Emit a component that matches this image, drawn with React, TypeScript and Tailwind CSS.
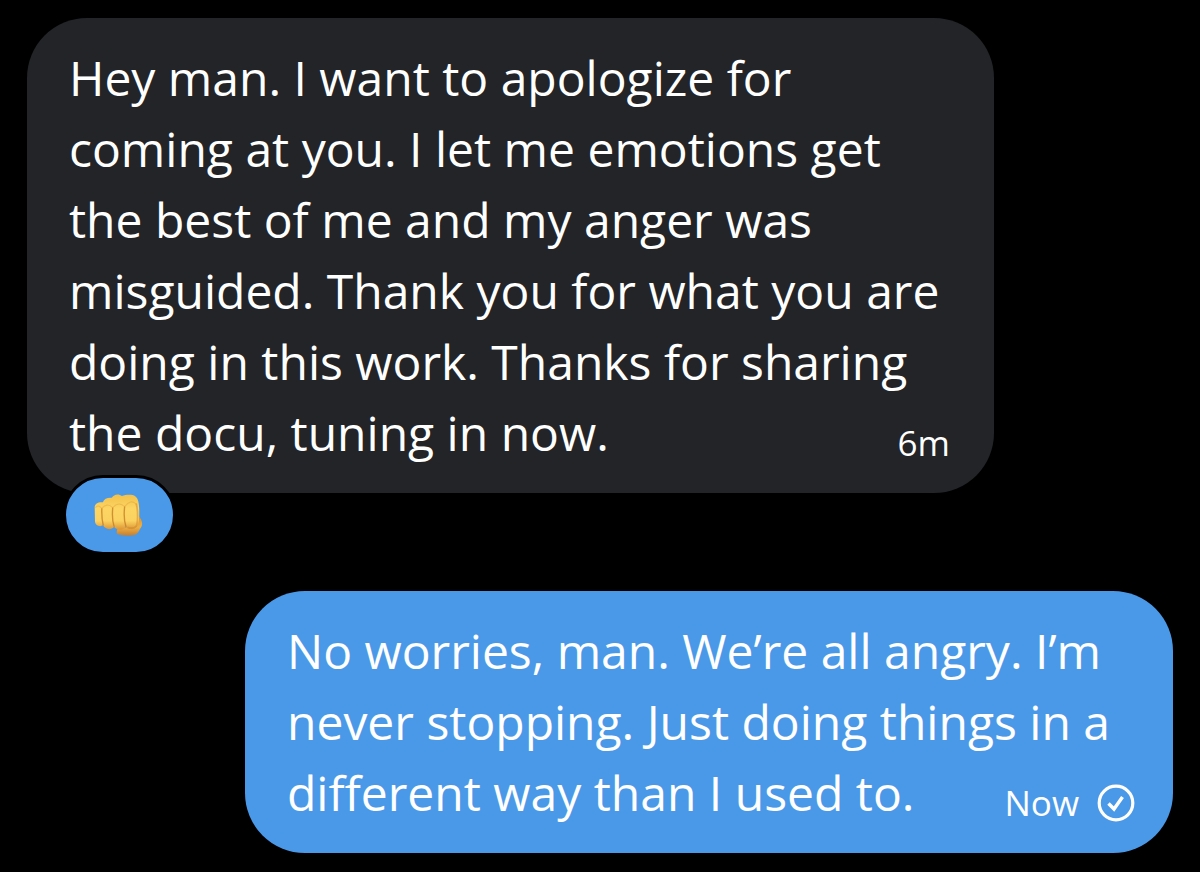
import type { ReactNode } from "react";

function FistIcon() {
  return (
    <svg viewBox="0 0 144 126" className="mr-0.5 h-[43px] w-[49px]" role="img" aria-label="Oncoming fist">
      <defs>
        <linearGradient id="skin" x1="0" y1="0" x2="0" y2="1">
          <stop offset="0" stopColor="#f3c04a" />
          <stop offset="0.4" stopColor="#fcd563" />
          <stop offset="0.75" stopColor="#fbd260" />
          <stop offset="1" stopColor="#dd9434" />
        </linearGradient>
        <linearGradient id="thumb" x1="0" y1="0" x2="0" y2="1">
          <stop offset="0" stopColor="#d98f2c" />
          <stop offset="0.6" stopColor="#eeb044" />
          <stop offset="1" stopColor="#c87e2c" />
        </linearGradient>
      </defs>
      <path
        d="M128 60 C141 74 145 88 138 98 C131 108 130 117 119 120 C103 124 84 122 70 118 C65 115 67 109 69 103 L118 93 Z"
        fill="url(#thumb)"
      />
      <path
        d="M2 38 C3 28 11 23 26 24 C30 13 40 10 52 11 C58 1 72 -3 82 6 C94 2 111 0 122 7 C131 14 133 31 133 53 C133 73 132 88 125 97 C116 107 101 104 94 96 C87 108 66 107 59 96 C51 107 33 105 27 92 C15 98 4 91 3 82 Z"
        fill="url(#skin)"
      />
      <path
        d="M23 43 Q22 70 27 91 M55 41 Q52 75 59 95 M90 38 Q86 72 94 96"
        fill="none"
        stroke="#c27a22"
        strokeWidth="4"
        strokeLinecap="round"
        opacity="0.75"
      />
      <path
        d="M4 40 Q12 29 23 42 Q38 24 55 40 Q73 20 90 37 Q108 13 125 30"
        fill="none"
        stroke="#e0a038"
        strokeWidth="3"
        opacity="0.45"
      />
      <path
        d="M124 28 C130 50 129 82 124 95 Q114 104 98 98"
        fill="none"
        stroke="#d0852c"
        strokeWidth="5"
        opacity="0.5"
      />
    </svg>
  );
}

function SentIcon() {
  return (
    <svg viewBox="0 0 38 38" className="size-[38px]" fill="none" stroke="currentColor" role="img" aria-label="Sent">
      <circle cx="19" cy="19" r="16.8" strokeWidth="3.2" />
      <path d="M11.5 19.5 L17 25 L25.5 13" strokeWidth="3.4" />
    </svg>
  );
}

type MessageProps = {
  lines: string[];
  lastLine: string;
  meta: ReactNode;
  className: string;
};

function Message({ lines, lastLine, meta, className }: MessageProps) {
  return (
    <article className={`rounded-[60px] pt-6 pb-[25px] pl-[42px] ${className}`}>
      {lines.map((line) => (
        <p key={line} className="whitespace-nowrap">
          {line}
        </p>
      ))}
      <div className="flex items-end justify-between">
        <p className="whitespace-nowrap">{lastLine}</p>
        <div className="flex items-center gap-[18px] text-[35px] leading-[50px]">{meta}</div>
      </div>
    </article>
  );
}

export default function App() {
  return (
    <main className="flex min-h-screen flex-col bg-black px-[27px] pt-[18px] pb-[18px] font-['Open_Sans',sans-serif] text-[48px] leading-[71px] text-white">
      <section className="flex flex-col items-start">
        <Message
          className="w-full max-w-[967px] bg-[#232428] pr-11"
          lines={[
            "Hey man. I want to apologize for",
            "coming at you. I let me emotions get",
            "the best of me and my anger was",
            "misguided. Thank you for what you are",
            "doing in this work. Thanks for sharing",
          ]}
          lastLine="the docu, tuning in now."
          meta={<time>6m</time>}
        />
        <button
          type="button"
          aria-label="Fist reaction"
          className="-mt-[18px] ml-9 box-content flex h-[74px] w-[107px] items-center justify-center rounded-full border-[3px] border-black bg-[#4a99e9]"
        >
          <FistIcon />
        </button>
      </section>
      <section className="mt-9 flex flex-col items-end">
        <Message
          className="w-full max-w-[928px] bg-[#4a99e9] pr-[38px]"
          lines={["No worries, man. We’re all angry. I’m", "never stopping. Just doing things in a"]}
          lastLine="different way than I used to."
          meta={
            <>
              <time>Now</time>
              <SentIcon />
            </>
          }
        />
      </section>
    </main>
  );
}
